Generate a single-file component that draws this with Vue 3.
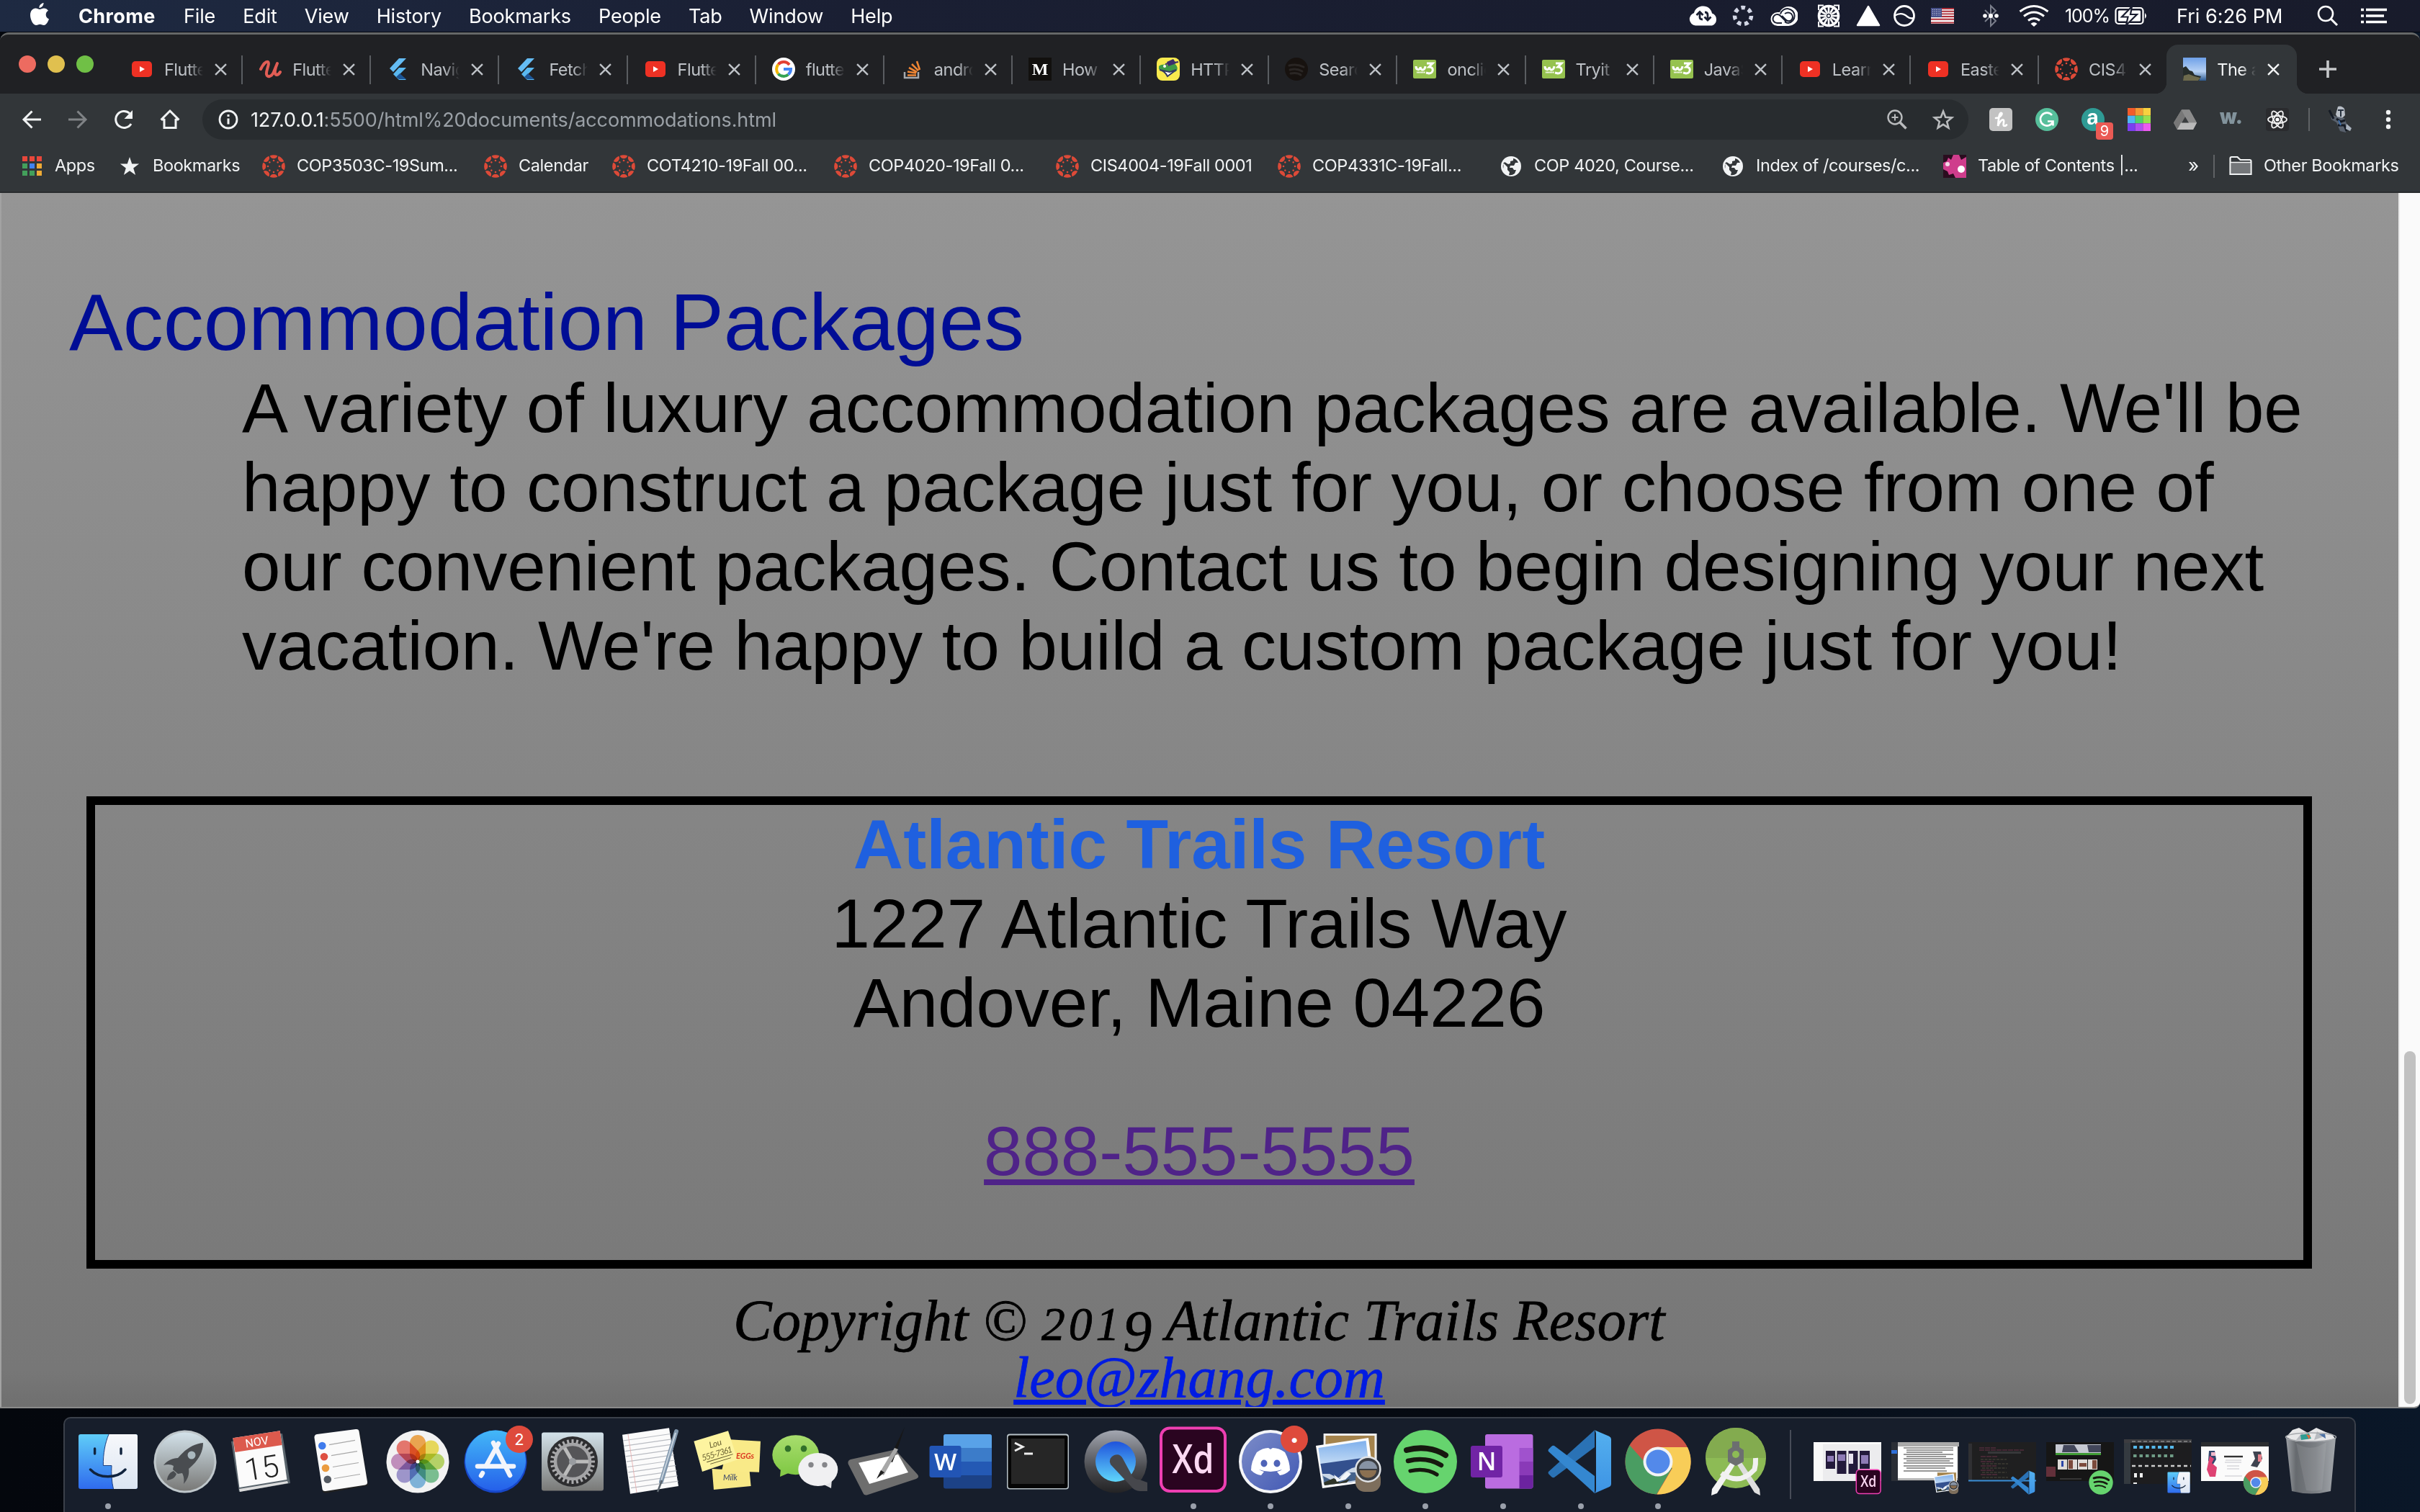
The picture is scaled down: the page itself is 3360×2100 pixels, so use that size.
<script setup>
const menus = ['File', 'Edit', 'View', 'History', 'Bookmarks', 'People', 'Tab', 'Window', 'Help']

const tabs = [
  { icon: 'youtube', title: 'Flutter' },
  { icon: 'udemy', title: 'Flutter' },
  { icon: 'flutter', title: 'Navigate' },
  { icon: 'flutter', title: 'Fetch' },
  { icon: 'youtube', title: 'Flutter' },
  { icon: 'google', title: 'flutter' },
  { icon: 'stack', title: 'android' },
  { icon: 'medium', title: 'How to' },
  { icon: 'gator', title: 'HTTP' },
  { icon: 'spotdark', title: 'Search' },
  { icon: 'w3', title: 'onclick' },
  { icon: 'w3', title: 'Tryit E' },
  { icon: 'w3', title: 'JavaS' },
  { icon: 'youtube', title: 'Learn' },
  { icon: 'youtube', title: 'Easter' },
  { icon: 'canvas', title: 'CIS400' },
  { icon: 'photo', title: 'The a', active: true }
]

const bookmarks = [
  { icon: 'apps', title: 'Apps', size: 'apps' },
  { icon: 'star', title: 'Bookmarks', size: 'marks' },
  { icon: 'canvas', title: 'COP3503C-19Sum...' },
  { icon: 'canvas', title: 'Calendar', size: 'cal' },
  { icon: 'canvas', title: 'COT4210-19Fall 00...' },
  { icon: 'canvas', title: 'COP4020-19Fall 0...' },
  { icon: 'canvas', title: 'CIS4004-19Fall 0001' },
  { icon: 'canvas', title: 'COP4331C-19Fall...' },
  { icon: 'globe', title: 'COP 4020, Course...' },
  { icon: 'globe', title: 'Index of /courses/c...' },
  { icon: 'pink', title: 'Table of Contents |...' }
]

const extensions = ['honey', 'grammarly', 'amazon', 'grid', 'drive', 'wdot', 'react']

const dock = [
  { id: 'finder', run: true },
  { id: 'rocket' },
  { id: 'calendar' },
  { id: 'reminders' },
  { id: 'photos' },
  { id: 'appstore', badge: '2' },
  { id: 'settings' },
  { id: 'textedit' },
  { id: 'stickies' },
  { id: 'wechat' },
  { id: 'tablet' },
  { id: 'word' },
  { id: 'terminal' },
  { id: 'quicktime' },
  { id: 'xd', run: true },
  { id: 'discord', run: true, badge: '•' },
  { id: 'preview', run: true },
  { id: 'spotify', run: true },
  { id: 'onenote', run: true },
  { id: 'vscode', run: true },
  { id: 'chrome', run: true },
  { id: 'studio' }
]

const minimized = [
  { id: 'win-xd', app: 'xd' },
  { id: 'win-doc', app: 'preview' },
  { id: 'win-code', app: 'vscode' },
  { id: 'win-music', app: 'spotify' },
  { id: 'win-files', app: 'finder' },
  { id: 'win-web', app: 'chrome' }
]

const ring = [0, 45, 90, 135, 180, 225, 270, 315]
const petals = ['#f5a33c', '#f2e04a', '#b6d957', '#6fc08a', '#74b3e0', '#9a8fd0', '#c487bd', '#ee6a60']
const teeth = Array.from({ length: 28 }, (_, i) => (i * 360) / 28)
const spokes = [0, 30, 60, 90, 120, 150]
const gridColors = ['#f25c2b', '#f59a33', '#f8d13f', '#4fb6f2', '#52cf6a', '#97e04f', '#7a3ff0', '#b04ff0', '#ec5af0']
const shades = [0, 1, 2, 3, 4, 5, 6, 7, 8, 9]
</script>

<template>
  <div class="screen">
    <svg class="sprite" width="0" height="0" aria-hidden="true">
      <defs>
        <linearGradient id="gBlue" x1="0" y1="0" x2="0" y2="1"><stop offset="0" stop-color="#5fcdf8" /><stop offset="1" stop-color="#2f6bee" /></linearGradient>
        <linearGradient id="gStore" x1="0" y1="0" x2="0" y2="1"><stop offset="0" stop-color="#43b8f8" /><stop offset="1" stop-color="#2560ea" /></linearGradient>
        <linearGradient id="gWhite" x1="0" y1="0" x2="0" y2="1"><stop offset="0" stop-color="#f7f8fb" /><stop offset="1" stop-color="#dbe5f2" /></linearGradient>
        <linearGradient id="gSilver" x1="0" y1="0" x2="0" y2="1"><stop offset="0" stop-color="#d3e2ea" /><stop offset="1" stop-color="#797977" /></linearGradient>
        <linearGradient id="gGreen" x1="0" y1="0" x2="0" y2="1"><stop offset="0" stop-color="#a8dd6e" /><stop offset="1" stop-color="#80c844" /></linearGradient>
        <linearGradient id="gQt" x1="0" y1="0" x2="0" y2="1"><stop offset="0" stop-color="#a3a7b1" /><stop offset=".6" stop-color="#4a4b4f" /><stop offset="1" stop-color="#232325" /></linearGradient>
        <linearGradient id="gQtIn" x1="0" y1="0" x2="0" y2="1"><stop offset="0" stop-color="#1f53dc" /><stop offset="1" stop-color="#5fd6fb" /></linearGradient>
        <linearGradient id="gDiscord" x1="0" y1="0" x2="1" y2="1"><stop offset="0" stop-color="#7c8cc8" /><stop offset="1" stop-color="#4259b4" /></linearGradient>
        <linearGradient id="gSea" x1="0" y1="0" x2="0" y2="1"><stop offset="0" stop-color="#7fb0ec" /><stop offset="1" stop-color="#c5dcf5" /></linearGradient>
        <linearGradient id="gTrash" x1="0" y1="0" x2="1" y2="0"><stop offset="0" stop-color="#a9acb0" /><stop offset=".2" stop-color="#6e7175" /><stop offset=".6" stop-color="#85888c" /><stop offset="1" stop-color="#b0b3b7" /></linearGradient>
        <linearGradient id="gSky" x1="0" y1="0" x2="0" y2="1"><stop offset="0" stop-color="#6ea0e8" /><stop offset=".6" stop-color="#b7d2f4" /><stop offset="1" stop-color="#2d5a90" /></linearGradient>
        <linearGradient id="gVs" x1="0" y1="0" x2="0" y2="1"><stop offset="0" stop-color="#54b0ef" /><stop offset="1" stop-color="#3d93e4" /></linearGradient>
      </defs>

      <!-- tab and bookmark icons -->
      <symbol id="youtube" viewBox="0 0 32 32"><rect x="2" y="5" width="28" height="22" rx="5" fill="#ee3124" /><path d="M13 12l7 4-7 4z" fill="#fff" /></symbol>
      <symbol id="udemy" viewBox="0 0 32 32"><path d="M3 16C6 10 10 5 13 6c3 2-3 12-2 17 1 5 7 4 10-3l5-12c-3 7-5 15-1 16 2 0 4-2 5-4" fill="none" stroke="#e15d55" stroke-width="4" stroke-linecap="round" stroke-linejoin="round" /></symbol>
      <symbol id="flutter" viewBox="0 0 32 32"><path d="M17 1h10L9 20l-5-5z" fill="#64bcf4" /><path d="M17 14h10l-9 9 9 8H17l-8-8z" fill="#5ab8f0" /><path d="M13 27l5-5 9 8H17z" fill="#1c5596" /></symbol>
      <symbol id="google" viewBox="0 0 32 32"><circle cx="16" cy="16" r="16" fill="#fff" /><path d="M24 10A10 10 0 0 0 8.5 9.500" fill="none" stroke="#e34133" stroke-width="4" /><path d="M8.500 9.500a10 10 0 0 0 0 13" fill="none" stroke="#f3b605" stroke-width="4" /><path d="M8.500 22.500a10 10 0 0 0 14 1" fill="none" stroke="#34a353" stroke-width="4" /><path d="M16 16h10a10 10 0 0 1-3.500 7.500" fill="none" stroke="#4285f4" stroke-width="4" /></symbol>
      <symbol id="stack" viewBox="0 0 32 32"><path d="M6 20v8h19v-8" fill="none" stroke="#a5a9ad" stroke-width="2.500" /><path d="M10 24.500h12M10 19.500l12 2M12 14l11 6M16 9l9 9M23 5l4 12" stroke="#ee8534" stroke-width="2.600" /></symbol>
      <symbol id="medium" viewBox="0 0 32 32"><rect width="32" height="32" fill="#12100e" /><text x="16" y="24" text-anchor="middle" font-family="Liberation Serif" font-weight="700" font-size="24" fill="#fff">M</text></symbol>
      <symbol id="gator" viewBox="0 0 32 32"><rect width="32" height="32" rx="8" fill="#f8ea4e" /><path d="M3 12c4-3 9-3 13-1l8-3c5 3 6 8 3 11l-9 4C12 19 6 18 3 16z" fill="#3f9a46" /><path d="M14 6l9-4 4 6-11 4z" fill="#3d2f6b" /><path d="M12 9l18-3" stroke="#3d2f6b" stroke-width="2" /><path d="M4 17c5 1 8 3 11 9l12-9-9 3z" stroke="#333b60" stroke-width="2" fill="#fff" /><circle cx="11" cy="12" r="2" fill="#fff" /></symbol>
      <symbol id="spotdark" viewBox="0 0 32 32"><circle cx="16" cy="16" r="16" fill="#17120f" /><path d="M6 11c7-2 14-1 20 2M7 17c6-2 12-1 17 2M8 22c5-1 10-1 14 2" fill="none" stroke="#2a2624" stroke-width="3" stroke-linecap="round" /></symbol>
      <symbol id="w3" viewBox="0 0 32 32"><rect y="3" width="32" height="26" rx="2" fill="#96c24f" /><path d="M4 12c0 6 6 6 6 1 1 6 6 5 7-1M19 8h8l-5 5c8 0 6 9 0 9l-4-1" fill="none" stroke="#fff" stroke-width="3" /><path d="M5 20.500h12" stroke="#fff" stroke-width="1.800" stroke-dasharray="1.500 .5" /></symbol>
      <symbol id="canvas" viewBox="0 0 32 32">
        <g v-for="a in ring" :key="a" :transform="`rotate(${a} 16 16)`" fill="#dd4a38"><path d="M10.700 1.300Q16-1 21.300 1.300Q20 5.300 16 5.300Q12 5.300 10.700 1.300z" /><circle cx="16" cy="8" r="1.300" /></g>
      </symbol>
      <symbol id="photo" viewBox="0 0 32 32"><rect width="32" height="32" fill="url(#gSky)" /><path d="M0 14l4-2 5 6 4 1 3 5 9 2-3 6H0z" fill="#252c2a" /><path d="M1 25l7-2 8 3 8 2-3 4H0z" fill="#6d6a4c" /></symbol>
      <symbol id="apps" viewBox="0 0 32 32">
        <path d="M3 2h7v7H3zM13 2h7v7h-7zM23 2h7v7h-7z" fill="#e8473b" /><path d="M3 12h7v7H3zM3 22h7v7H3zM13 22h7v7h-7z" fill="#43a05b" /><path d="M13 12h7v7h-7z" fill="#3f82f0" /><path d="M23 12h7v7h-7zM23 22h7v7h-7z" fill="#eeaa35" />
      </symbol>
      <symbol id="star" viewBox="0 0 32 32"><path d="M16 3l3.200 9.400 9.900.1-7.900 6 2.900 9.500-8.100-5.700L7.900 28l2.900-9.500-7.900-6 9.900-.1z" fill="#f1f3f4" /></symbol>
      <symbol id="globe" viewBox="0 0 32 32"><circle cx="16" cy="16" r="14" fill="#f1f3f4" /><path d="M19 5q5 1 7 6l-4 0-2 4h-5l-1 3 4 0 2 3 3 0-2 5q-4 3-8 2l1-4-3-3 0-4-6-6q1 6 0 8-1-6 2-9l5 3 3-1 0-3 4-1z" fill="#323639" /></symbol>
      <symbol id="pink" viewBox="0 0 32 32"><rect width="32" height="32" fill="#cf3d8c" /><path d="M0 0h14l-3 7-4-3-2 5-5 2zM0 20l6 3 2 5 6-2 3 6H0zM22 0l3 7 7-4V0z" fill="#2a0d1f" /><circle cx="6" cy="13" r="3" fill="#f2dbe7" /><circle cx="25" cy="20" r="5" fill="#fff" /></symbol>

      <!-- extension icons -->
      <symbol id="honey" viewBox="0 0 32 32"><rect width="32" height="32" rx="5" fill="#c2c2c2" /><path d="M9 14c6 0 10-6 8-7-4-1-4 10-5 18 2-6 6-10 8-8 1 2-2 8 1 8 1 0 2-.5 3-1.500" fill="none" stroke="#fff" stroke-width="2.700" stroke-linecap="round" /></symbol>
      <symbol id="grammarly" viewBox="0 0 32 32"><circle cx="16" cy="16" r="16" fill="#57bf9b" /><path d="M23 10a9 9 0 1 0 1.500 8.500M17 18.500h7.500v6" fill="none" stroke="#fff" stroke-width="2.600" /></symbol>
      <symbol id="amazon" viewBox="0 0 32 32"><circle cx="16" cy="16" r="16" fill="#2f9b95" /><text x="15.500" y="23" text-anchor="middle" font-family="Liberation Sans" font-weight="700" font-size="30" fill="#fff">a</text></symbol>
      <symbol id="grid" viewBox="0 0 33 33"><rect v-for="(c, i) in gridColors" :key="c" :x="(i % 3) * 11" :y="Math.floor(i / 3) * 11" width="11" height="11" :fill="c" /></symbol>
      <symbol id="drive" viewBox="0 0 32 32"><path d="M11 2.500h11l10 18-5 9.500H5L0 20.500z" fill="#9f9f9f" /><path d="M11 2.500h11l10 18H21z" fill="#8b8b8b" /><path d="M0 20.500L11 2.500l5 9.500L5 30z" fill="#777" /><path d="M10 20.500h22L27 30H5z" fill="#b9b9b9" /><path d="M16 12l5 8.500H11z" fill="#3a3c3e" /></symbol>
      <symbol id="wdot" viewBox="0 0 32 32"><text x="0" y="22" textLength="32" lengthAdjust="spacingAndGlyphs" font-family="Inter" font-weight="900" font-size="28" fill="#82939c">w.</text></symbol>
      <symbol id="react" viewBox="0 0 32 32"><rect width="32" height="32" rx="4" fill="#2a2b2e" /><g fill="none" stroke="#f2f2f2" stroke-width="1.800"><ellipse cx="16" cy="16" rx="13" ry="5" /><ellipse cx="16" cy="16" rx="13" ry="5" transform="rotate(60 16 16)" /><ellipse cx="16" cy="16" rx="13" ry="5" transform="rotate(120 16 16)" /></g><circle cx="16" cy="16" r="2.600" fill="#fff" /></symbol>

      <!-- dock icons -->
      <symbol id="finder" viewBox="0 0 100 100">
        <rect x="9" y="12" width="82" height="76" rx="3" fill="url(#gBlue)" />
        <path d="M51 12c-5 12-8 27-7.600 43.500H55C54.300 66 55 78 57.500 88H88a3 3 0 0 0 3-3V15a3 3 0 0 0-3-3z" fill="url(#gWhite)" />
        <path d="M51 12c-5 12-8 27-7.600 43.500H55C54.300 66 55 78 57.500 88" fill="none" stroke="#1c3f80" stroke-width="1" />
        <path d="M31.600 32v7M68 32v7M25.500 61c12 13 37 13 48.500 0" fill="none" stroke="#10233d" stroke-width="3.400" stroke-linecap="round" />
      </symbol>
      <symbol id="rocket" viewBox="0 0 100 100">
        <circle cx="50" cy="50" r="43.500" fill="#bfc7cb" /><circle cx="50" cy="50" r="40.500" fill="url(#gSilver)" />
        <path d="M75 24C61 25 49 34 40 45c-8 0-15 4-20 10 6-2 11-1 14 1l-1 5 7 6 6-1c2 4 3 8 2 15 6-7 8-13 7-21 12-10 20-22 20-36z" fill="#494c50" />
        <circle cx="59" cy="41" r="5.500" fill="#aab8bf" /><path d="M34 63c-6 2-9 8-9 13 6-1 11-3 13-9z" fill="#494c50" />
      </symbol>
      <symbol id="calendar" viewBox="0 0 100 100">
        <path d="M6 22l71-11 11 69-71 12z" fill="#59646c" /><path d="M17 88l67-11 1 3-67 12z" fill="#ddd" />
        <path d="M8.400 17.300L73.700 7.300 83.400 75l-66 11z" fill="#fbfbfb" /><path d="M8.400 17.300L73.700 7.300 76.500 27 11.500 37z" fill="#dc5a4d" />
        <g transform="rotate(-9 45 50)" font-family="Roboto" text-anchor="middle"><text x="46" y="28" font-size="16" fill="#fff">NOV</text><text x="47" y="74" font-size="43" font-weight="300" fill="#222">15</text></g>
      </symbol>
      <symbol id="reminders" viewBox="0 0 100 100">
        <path d="M16 14l60-7 12 76-59 11-4-2z" fill="#222" /><path d="M17 12l54-7q4-.5 4.500 3L87 78q.5 4-3 4.500L29 91q-4 .5-4.500-3L13.500 17q-.5-4 3.500-5z" fill="#fafafa" />
        <circle cx="24.300" cy="28" r="5.300" fill="#3f7bec" /><circle cx="27" cy="43.300" r="5.300" fill="#de4f41" /><circle cx="29" cy="59" r="5.300" fill="#eb9c40" /><circle cx="31.800" cy="74.700" r="5.300" fill="#555b63" />
        <path d="M34 26.700l36-6.400M37 41.700l36-6M39 57.500l36-6M41 73.500l36-6" stroke="#a8a8a8" stroke-width="1.200" />
      </symbol>
      <symbol id="photos" viewBox="0 0 100 100">
        <circle cx="50" cy="50" r="43.500" fill="#f2f2f2" />
        <g class="petals"><rect v-for="(c, i) in petals" :key="c" class="petal" x="39" y="13" width="22" height="37" rx="11" :fill="c" opacity=".88" :transform="`rotate(${i * 45} 50 50)`" /></g>
        <circle cx="50" cy="50" r="2.500" fill="#fff" />
      </symbol>
      <symbol id="appstore" viewBox="0 0 100 100">
        <circle cx="50" cy="50" r="43.500" fill="#1747c9" /><circle cx="50" cy="48.500" r="42" fill="url(#gStore)" />
        <g stroke="#f3f5fb" stroke-width="6.500" stroke-linecap="round" fill="none"><path d="M47 24l23 45" /><path d="M54 25L37 56" /><path d="M25 56.500h50" /><path d="M32 66l-2 3.500" /></g>
      </symbol>
      <symbol id="settings" viewBox="0 0 100 100">
        <rect x="7" y="9.500" width="86" height="81" rx="3" fill="url(#gSilver)" /><circle cx="50" cy="50" r="35" fill="#2e2e30" />
        <g fill="#aaaaac"><rect v-for="t in teeth" :key="t" x="48.500" y="19" width="3" height="8" :transform="`rotate(${t} 50 50)`" /></g>
        <circle cx="50" cy="50" r="24" fill="#555558" stroke="#a4a4a6" stroke-width="4.500" />
        <path d="M50 50h22M50 50L39 69M50 50L39 31" stroke="#bbb" stroke-width="5" /><circle cx="50" cy="50" r="5" fill="#999ca0" />
      </symbol>
      <symbol id="textedit" viewBox="0 0 100 100">
        <path d="M11 12.700L76 3.300 89 84l-67 10.700z" fill="#fbfbfb" />
        <path v-for="i in shades" :key="i" :d="`M${12 + i * 1.200} ${21 + i * 7.300}l66-9.500`" stroke="#b9bcc2" stroke-width="1.200" /><path d="M19 12l12 81" stroke="#e4a8a8" stroke-width=".8" />
        <path d="M86 8L65 78" stroke="#7f95ab" stroke-width="6" stroke-linecap="round" /><path d="M85 10L65 76" stroke="#c7d3de" stroke-width="2" /><path d="M66 76l-6 16" stroke="#5d666f" stroke-width="2.500" />
      </symbol>
      <symbol id="stickies" viewBox="0 0 100 100">
        <path d="M27.600 60L79.600 63l2 21-51.600 5z" fill="#f8e987" /><path d="M52 19.300l43 2.400-2 43-52-2z" fill="#f9ea88" /><path d="M2.400 21.700L50 7.300 63 47.300 14 64z" fill="#fdf4a0" />
        <g font-family="Lato" font-style="italic"><g transform="rotate(-17 34 34)" fill="#6b6334" font-size="12"><text x="26" y="29">Lou</text><text x="11" y="43" textLength="44">555-7361</text><path d="M16 46h38M20 50h30" stroke="#544d26" stroke-width="1" /></g><text x="61" y="46" font-size="11" font-weight="700" fill="#dc3a22">EGGs</text><text x="43" y="76" font-size="11" fill="#33406a">Milk</text></g>
      </symbol>
      <symbol id="wechat" viewBox="0 0 100 100">
        <path d="M16 60l-1 11 14-6z" fill="#87cb49" /><ellipse cx="36.800" cy="40.700" rx="32.500" ry="27.500" fill="url(#gGreen)" /><ellipse cx="26" cy="32" rx="4.300" ry="4.500" fill="#31702a" /><ellipse cx="48" cy="32" rx="4.300" ry="4.500" fill="#31702a" />
        <path d="M87 74l-1 13-12-6z" fill="#e2e3e6" /><ellipse cx="67.800" cy="61" rx="27.500" ry="23" fill="#f0f0f2" /><circle cx="58" cy="54.500" r="3.700" fill="#85868a" /><circle cx="77" cy="54.500" r="3.700" fill="#85868a" />
      </symbol>
      <symbol id="tablet" viewBox="0 0 100 100">
        <path d="M5 47l59-13q4-1 6 3l28 31q3 4-2 6L29 96q-5 2-7-3L2 54q-2-5 3-7z" fill="#6e6e6e" /><path d="M16 51.700L71 40l14 25-54 16z" fill="#fff" />
        <path d="M80 2L66 31l-9 18 6 2 7-18z" fill="#171717" /><path d="M66 31l5 2-20 36-6-3z" fill="#a8a8a8" /><path d="M47 62l5 3-11 9z" fill="#222" />
      </symbol>
      <symbol id="word" viewBox="0 0 100 100">
        <rect x="26" y="12" width="67" height="75.500" rx="3" fill="#1c4287" /><path d="M26 50h67v19H26z" fill="#2459b4" /><path d="M26 31h67v19H26z" fill="#3c7cc9" /><path d="M29 12h61a3 3 0 0 1 3 3v16H26V15a3 3 0 0 1 3-3z" fill="#59a2e8" />
        <rect x="6.500" y="28" width="44" height="44" rx="3" fill="#2255b5" /><text x="28.500" y="62" text-anchor="middle" font-family="Open Sans" font-weight="600" font-size="33" fill="#fff">W</text>
      </symbol>
      <symbol id="terminal" viewBox="0 0 100 100">
        <rect x="7" y="11.500" width="86" height="77" rx="4" fill="#b8c2c8" /><rect x="8.500" y="13.500" width="83" height="73.500" rx="3" fill="#050505" /><rect x="13" y="18" width="74" height="63" fill="#262626" />
        <path d="M18 24l11 5.500L18 35" fill="none" stroke="#eee" stroke-width="3" /><path d="M31 39h12" stroke="#eee" stroke-width="3" />
      </symbol>
      <symbol id="quicktime" viewBox="0 0 100 100">
        <circle cx="50" cy="50" r="43.500" fill="url(#gQt)" /><circle cx="50" cy="50" r="28" fill="url(#gQtIn)" /><path d="M43 54q-4-9 5-13 8-3 12 5l13 24q4 5 10 5l11 4v12H84q-8 0-13-7z" fill="#46474c" />
      </symbol>
      <symbol id="xd" viewBox="0 0 100 100">
        <rect x="4" y="1.500" width="93" height="91.500" rx="14" fill="#ee3fb2" /><rect x="8" y="5.500" width="85" height="83.500" rx="10" fill="#2a0420" /><text x="50.500" y="65.500" text-anchor="middle" font-family="Open Sans" font-weight="600" font-size="56" textLength="58" lengthAdjust="spacingAndGlyphs" fill="#fcd9f3">Xd</text>
      </symbol>
      <symbol id="discord" viewBox="0 0 100 100">
        <circle cx="50" cy="50" r="44" fill="#f4f5f8" /><circle cx="50" cy="50" r="40" fill="url(#gDiscord)" />
        <path d="M31 37q8-6 16-6l3 2 3-2q9 0 17 6 7 13 7 25-6 6-14 7l-4-5q5-1 7-3-16 6-32 0 3 2 7 3l-4 5q-8-1-14-7 0-12 8-25z" fill="#fff" /><ellipse cx="41" cy="52.500" rx="4.500" ry="5" fill="#4f64b8" /><ellipse cx="59" cy="52.500" rx="4.500" ry="5" fill="#4f64b8" />
      </symbol>
      <symbol id="preview" viewBox="0 0 100 100">
        <path d="M15.600 11h74v62h-74z" fill="#eee" /><path d="M18.500 14h68v58h-68z" fill="#a4834c" /><path d="M5 28l73-11 8 60-72 10z" fill="#fbfbfb" />
        <path d="M8.500 31l66-10 3 25-66 9z" fill="url(#gSea)" /><path d="M11.500 53L77 44l5 31-65.500 8z" fill="#33508e" /><path d="M14 67l10 0 12 6 10-9 9-5 8-2 17-4 2 22-66 8z" fill="#c9d6e6" /><path d="M15 70l12 6 14-4 12-7 10 0 18-2 1 6-14 6-51 7z" fill="#44628c" /><path d="M16 79l14-6 8 6 14-5-4 5-31 4z" fill="#2f3428" /><path d="M30 68l8 6 10-10 6 3-8 8-12 3z" fill="#f2f5f9" />
        <rect x="60" y="61" width="35" height="31" rx="13" fill="#7d6e5c" /><circle cx="77.400" cy="60.700" r="17" fill="#3a3c40" stroke="#dfe2e5" stroke-width="2.500" /><path d="M65 60a12.500 11 0 0 1 25 0z" fill="#8793a4" /><path d="M66 62h23a11 10 0 0 1-23 0z" fill="#8b7051" />
      </symbol>
      <symbol id="spotify" viewBox="0 0 100 100">
        <circle cx="50" cy="50" r="44" fill="#66d46e" /><g fill="none" stroke="#16190f" stroke-linecap="round"><path d="M24 34c19-5 39-3 54 7" stroke-width="8" /><path d="M26 49c16-4 33-2 46 6" stroke-width="6.500" /><path d="M29 63c13-3 26-2 37 5" stroke-width="5.200" /></g>
      </symbol>
      <symbol id="onenote" viewBox="0 0 100 100">
        <rect x="25" y="12" width="66.500" height="75.500" rx="3" fill="#ba6ce0" /><path d="M72.500 31h19v19h-19z" fill="#a052cd" /><path d="M72.500 50h19v19h-19z" fill="#8a3ab8" /><path d="M72.500 69h19v15.500a3 3 0 0 1-3 3h-16z" fill="#6c23a0" />
        <rect x="5" y="28" width="44" height="44" rx="3" fill="#7124a5" /><text x="27" y="62" text-anchor="middle" font-family="Open Sans" font-weight="600" font-size="34" fill="#fff">N</text>
      </symbol>
      <symbol id="vscode" viewBox="0 0 100 100">
        <path d="M70 6.300V30L14 72q-2 1-4-1l-4-4q-1-2 0-3z" fill="#2a72b5" /><path d="M70 94V70L14 28q-2-1-4 1l-4 4q-1 2 0 3z" fill="#3487d0" /><path d="M70 6.300l20 8.500q3 1.500 3 4v62q0 3-3 4.500L70 94q2-2 2-5V11q0-3-2-4.700z" fill="url(#gVs)" />
      </symbol>
      <symbol id="chrome" viewBox="0 0 100 100">
        <circle cx="50" cy="50" r="45.500" fill="#cf5546" /><path d="M10.600 27.300A45.500 45.500 0 0 0 48 95.500L70 58 50 50H31z" fill="#4a9d62" /><path d="M91 30H50v20l20 9-21.500 36.500A45.500 45.500 0 0 0 91 30z" fill="#f8cd58" /><circle cx="50" cy="50" r="20.500" fill="#f2f3f5" /><circle cx="50" cy="50" r="16.500" fill="#5389ea" />
      </symbol>
      <symbol id="studio" viewBox="0 0 100 100">
        <circle cx="50" cy="45" r="42" fill="#8dbb55" /><path d="M8 45a42 42 0 0 1 84 0z" fill="#83ab4f" />
        <path d="M45 48h8L24 94l-8 3 1-9z" fill="#f3f3f3" /><path d="M48 48h8l27 40 1 9-8-4z" fill="#dedede" /><path d="M30 66q25 18 46-5 2-7 1.500-16" fill="none" stroke="#f1f1f1" stroke-width="7" />
        <path d="M45 22h10v8l6 4v16L50 56 39 50V34l6-4z" fill="#6c6f70" /><circle cx="50" cy="40" r="5" fill="#8dbb55" />
      </symbol>

      <!-- minimized windows -->
      <symbol id="win-xd" viewBox="0 0 100 100"><rect x="3" y="23" width="94" height="54" fill="#ececee" /><path d="M3 23h94v2.500H3z" fill="#fff" /><path d="M3 25h13v52H3z" fill="#f8f8f8" /><path d="M20 35h13v25H20zM35.500 35h13v32h-13zM51.500 35h13v32h-13zM67 35h14v25H67z" fill="#231a3b" /><path d="M22 42h9v8h-9zM37 40h10v9H37zM69 41h10v12H69z" fill="#8e7bb6" /><path d="M52 39h6v14h-6z" fill="#e9e4f0" /></symbol>
      <symbol id="win-doc" viewBox="0 0 100 100"><rect x="3" y="23" width="94" height="54" fill="#2a2e36" /><path d="M12 23h85v6H12z" fill="#aaa" /><path d="M12 29h83v44H12z" fill="#fff" /><path d="M3 34h8v5H3z" fill="#2f6fd8" /><path d="M20 31h69M24 34h65M24 37h50M20 40h69M24 43h55M20 46h69M24 49h60M20 52h69M20 56h69M24 59h54M20 63h60" stroke="#777" stroke-width="1.400" /><path d="M12 73h83v3H12z" fill="#b8b8b8" /></symbol>
      <symbol id="win-code" viewBox="0 0 100 100"><rect x="3" y="23" width="94" height="54" fill="#1f1f20" /><path d="M3 25h5v51H3z" fill="#303033" /><path d="M3 75.500h94v2H3z" fill="#3b8fd8" /><path d="M18 31h24M18 34h62M20 43h24M20 50h18M20 56h22M20 62h18M20 68h24" stroke="#6b3348" stroke-width="1.200" stroke-dasharray="7 1" /><path d="M20 47h36M22 53h36M22 59h34M22 65h34M22 72h36" stroke="#4c4b3c" stroke-width="1" stroke-dasharray="4 1.500" /><path d="M30 36h46v3H30z" fill="#37383a" /></symbol>
      <symbol id="win-music" viewBox="0 0 100 100"><rect x="3" y="23" width="94" height="54" fill="#161616" /><path d="M16 26h63v12H16z" fill="#c6c9d2" /><path d="M27 27h15l6 10H25zM60 27h19v10H62z" fill="#42465a" /><path d="M16 38h63v3H16z" fill="#3f9b34" /><path d="M19 47h13v14H19zM33 47h13v14H33zM47 47h13v14H47zM61 47h13v14H61z" fill="#dedad7" /><path d="M34 48h6v12h-6zM49 52h10v5H49zM67 48h6v12h-6z" fill="#7c4a3c" /><path d="M24 49h3v8h-3z" fill="#2c46a8" /><path d="M3 57h13v14H3z" fill="#63303a" /><path d="M22 74h30" stroke="#555" /></symbol>
      <symbol id="win-files" viewBox="0 0 100 100"><rect x="3" y="19" width="94" height="62" fill="#1d1d1f" /><path d="M3 19h94v5H3z" fill="#3c3c40" /><path d="M3 24h9v57H3z" fill="#343a40" /><path d="M14 22h82" stroke="#888" stroke-width="1.500" stroke-dasharray="5 3" /><path d="M16 30h57" stroke="#55b7ea" stroke-width="4" stroke-dasharray="5 3.500" /><path d="M16 42h57" stroke="#6f9c86" stroke-width="4" stroke-dasharray="4.500 4" /><path d="M14 56h82" stroke="#ccc" stroke-width="2.600" stroke-dasharray="5 4" /><path d="M17 66h4v6h-4zM25 66h4v6h-4zM16 79h5v2h-5z" fill="#eee" /></symbol>
      <symbol id="win-web" viewBox="0 0 100 100"><rect x="3" y="23" width="94" height="54" fill="#fbfbfb" /><path d="M3 23h94v6H3z" fill="#2b2d30" /><path d="M14 35h8l2 12-5 8-6-6z" fill="#34476e" /><path d="M15 42l6 4-3 6 7 6-2 13-8 0-4-10z" fill="#de4373" /><path d="M17 37h6v5h-6z" fill="#efb6c8" /><path d="M75 36h11l2 10-7 12-9-2 6-10z" fill="#3f4450" /><path d="M82 40h5v10h-5z" fill="#e7828d" /><path d="M35 43h26" stroke="#333" stroke-width="2.400" /><path d="M37 48h22M36 51h23M39 56h17M39 60h17M36 70h24" stroke="#c4c4ca" /></symbol>
      <symbol id="trash" viewBox="0 0 100 100">
        <path d="M16 17q34 8 69 0l-7 74q-27 7-54 0z" fill="url(#gTrash)" opacity=".92" /><path d="M16 16L25 6l9-3 12 7 12-7 13 6 9 3 4 6-17 4H30z" fill="#e7e7e8" /><path d="M30 20l8-10 10 9zM55 20l4-12 10 7z" fill="#b7bbc0" /><path d="M36 13l12-2 3 7-14 2z" fill="#2f9c92" /><path d="M44 12l6 2-2 5z" fill="#e36b3d" /><path d="M62 12l8-1 1 7z" fill="#4b6fa3" /><ellipse cx="50.500" cy="16" rx="35" ry="6" fill="none" stroke="#a6a9ad" stroke-width="1.500" /><path d="M30 24q20 14 42-1l-6 66q-10 3-22 1z" fill="#fff" opacity=".09" />
      </symbol>
    </svg>

    <header class="menubar">
      <svg class="apple" viewBox="0 0 26 32"><path d="M18.500 0c.3 3-2.500 7-6 7C12 4 15 .6 18.500 0zM13 9c2-.2 3.500-1.500 6-1.500 2.300 0 4.600 1.200 6 3.300-5 3-4 9.700 1 11.700-1.500 4-4 8.500-7 8.500-2.200 0-3-1.300-5.500-1.300S10.200 31 8 31C3.500 31 0 22.500 0 17c0-6 3.600-9.400 7.300-9.400 2.500 0 4.200 1.400 5.700 1.400z" fill="#fff" /></svg>
      <b class="app-name">Chrome</b>
      <nav class="menus"><span v-for="m in menus" :key="m">{{ m }}</span></nav>
      <div class="status">
        <svg class="s-cloud" width="40" height="32" viewBox="0 0 40 32"><path d="M9 29.500a9 9 0 0 1-2-17.500C9 5 14 2.500 20 2.500s11 4 12 10a9 9 0 0 1 0 17z" fill="#fff" /><path d="M15 12v6q0 3 4 3M10.500 15l4.500-4.500 4.500 4.500M26 20v-5q0-4-4-4M21.500 17.500l4.500 4.500 4.500-4.500" fill="none" stroke="#1a1f31" stroke-width="2.800" /></svg>
        <svg class="s-dots" width="30" height="32" viewBox="0 0 30 32"><circle cx="15" cy="16" r="11.500" fill="none" stroke="#d3d7e6" stroke-width="5.500" pathLength="77" stroke-dasharray="6 5" /></svg>
        <svg class="s-cc" width="38" height="32" viewBox="0 0 38 32"><path d="M10 30a9.500 9.500 0 0 1 0-19h3A13.500 13.500 0 1 1 25 30z" fill="#fff" /><path d="M16 26h-6a6 6 0 1 1 4-10l8 8M14 13.500a10 10 0 1 1 11 12.500q-3 0-5-2M20 13q5-3 9 0 4 5 0 9-4 3-8-1l-5-5" fill="none" stroke="#1a1f31" stroke-width="2" /></svg>
        <svg class="s-wheel" width="32" height="32" viewBox="0 0 32 32"><g stroke="#fff" fill="none"><circle cx="16" cy="16" r="13.500" stroke-width="3.600" /><path v-for="s in spokes" :key="s" d="M16 3v8M16 21v8" stroke-width="2.600" :transform="`rotate(${s} 16 16)`" /><path d="M2 8V1.500h7M30 8V1.500h-7M2 24v6.500h7M30 24v6.500h-7" stroke-width="2" /></g><circle cx="16" cy="16" r="5" fill="#fff" /><circle cx="16" cy="16" r="2.500" fill="none" stroke="#1a1f31" stroke-width="1.300" /></svg>
        <svg class="s-tri" width="34" height="32" viewBox="0 0 34 32"><path d="M17 3L32 29H2z" fill="#fff" stroke="#fff" stroke-width="2.500" stroke-linejoin="round" /></svg>
        <svg class="s-circle" width="30" height="32" viewBox="0 0 30 32"><circle cx="15" cy="16" r="13.500" fill="none" stroke="#fff" stroke-width="2.800" /><path d="M2 15.500c7-4 12-3 17 1.500 3 2.500 6 3 9.500 2" fill="none" stroke="#fff" stroke-width="2.400" /></svg>
        <svg class="s-flag" width="32" height="22" viewBox="0 0 32 22"><rect width="32" height="22" fill="#f4f1f1" /><path d="M0 1h32M0 4.700h32M0 8.400h32M0 12h32M0 15.700h32M0 20.500h32" stroke="#b0303a" stroke-width="1.900" /><rect width="15" height="13" fill="#46508a" /><path d="M2 2.500h12M2 5h12M2 7.500h12M2 10h12" stroke="#d8dcec" stroke-width="1" stroke-dasharray="1 1.500" /></svg>
        <svg class="s-bt" width="22" height="32" viewBox="0 0 22 32"><path d="M3 8l15 15-7 7V2l7 7L3 24" fill="none" stroke="#7a7e8b" stroke-width="2" /><circle cx="3" cy="16" r="2.800" fill="#fff" /><circle cx="11" cy="16" r="3" fill="#fff" /><circle cx="19" cy="16" r="2.800" fill="#fff" /></svg>
        <svg class="s-wifi" width="42" height="32" viewBox="0 0 42 32"><path d="M1.500 10q19.500-15 39 0M7 16.500q14-11 28 0M13 22.500q8-6 16 0" fill="none" stroke="#fff" stroke-width="3" /><path d="M16.500 27q4.500-4 9 0L21 31z" fill="#fff" /></svg>
        <span class="percent">100%</span>
        <svg class="s-bat" width="46" height="28" viewBox="0 0 46 28"><rect x="1.500" y="3" width="38" height="22" rx="4" fill="none" stroke="#fff" stroke-width="2.200" /><rect x="5" y="6.500" width="31" height="15" rx="1.500" fill="#fff" /><path d="M42 10q4 4 0 8z" fill="#fff" /><path d="M24 1L10 15.500h8.500L16 27l15-15h-9z" fill="#fff" stroke="#1a1e30" stroke-width="2.200" /></svg>
        <span class="clock">Fri 6:26 PM</span>
        <svg class="s-search" width="30" height="30" viewBox="0 0 30 30"><circle cx="12" cy="12" r="10" fill="none" stroke="#fff" stroke-width="2.600" /><path d="M19 19l9 9" stroke="#fff" stroke-width="3" /></svg>
        <svg class="s-list" width="36" height="22" viewBox="0 0 36 22"><path d="M0 2.500h4M7 2.500h29M0 11h4M7 11h25M0 19.500h4M7 19.500h29" stroke="#fff" stroke-width="3.600" /></svg>
      </div>
    </header>

    <section class="window">
      <div class="tabstrip">
        <div class="lights"><i class="red"></i><i class="yellow"></i><i class="green"></i></div>
        <div v-for="(t, i) in tabs" :key="i" class="tab" :class="{ active: t.active, last: i === tabs.length - 2 }">
          <svg class="favicon"><use :href="'#' + t.icon" /></svg>
          <span class="title">{{ t.title }}</span>
          <svg class="close" viewBox="0 0 16 16"><path d="M1 1l14 14M15 1L1 15" stroke="currentColor" stroke-width="2.300" /></svg>
        </div>
        <svg class="plus" viewBox="0 0 24 24"><path d="M12 0v24M0 12h24" stroke="#c6c8ca" stroke-width="3.600" /></svg>
      </div>

      <div class="toolbar">
        <svg class="nav" viewBox="0 0 32 32"><path d="M29 16H5M16.500 4.500L5 16l11.500 11.500" fill="none" stroke="#f1f3f4" stroke-width="3" /></svg>
        <svg class="nav" viewBox="0 0 32 32"><path d="M3 16h24M15.500 4.500L27 16 15.500 27.500" fill="none" stroke="#808386" stroke-width="3" /></svg>
        <svg class="nav" viewBox="0 0 32 32"><path d="M26 22a11.500 11.500 0 1 1-2-14.500" fill="none" stroke="#f1f3f4" stroke-width="3" /><path d="M28 3v12H16.500z" fill="#f1f3f4" /></svg>
        <svg class="nav" viewBox="0 0 32 32"><path d="M8 15v12.500h16V15M3.500 16.500L16 4l12.500 12.500M4 16h4.500M23.500 16H28" fill="none" stroke="#f1f3f4" stroke-width="3" /></svg>
        <div class="omnibox">
          <svg class="info" viewBox="0 0 28 28"><circle cx="14" cy="14" r="12" fill="none" stroke="#f1f3f4" stroke-width="2.800" /><path d="M14 12.500v8M14 7v3" stroke="#f1f3f4" stroke-width="3" /></svg>
          <span class="url"><b>127.0.0.1</b>:5500/html%20documents/accommodations.html</span>
          <svg class="pill-icon" viewBox="0 0 32 32"><circle cx="13" cy="13" r="9.500" fill="none" stroke="#b9bbbd" stroke-width="2.400" /><path d="M13 8.500v9M8.500 13h9" stroke="#b9bbbd" stroke-width="2" /><path d="M20 20l8.500 8.500" stroke="#b9bbbd" stroke-width="3.600" /></svg>
          <svg class="pill-icon" viewBox="0 0 32 32"><path d="M16 4.500l3.200 8.300 8.900.6-6.900 5.700 2.200 8.600-7.400-4.800-7.400 4.800 2.200-8.600-6.900-5.700 8.900-.6z" fill="none" stroke="#b9bbbd" stroke-width="2.600" /></svg>
        </div>
        <div class="extensions">
          <span v-for="e in extensions" :key="e" class="ext"><svg width="32" height="32"><use :href="'#' + e" /></svg><em v-if="e === 'amazon'">9</em></span>
        </div>
        <i class="bar"></i>
        <svg class="avatar" viewBox="0 0 36 38"><path d="M14 1q5-2 9 3l1 9-4 4h-6l-3-5z" fill="#b9bfc7" /><path d="M14 6h8M18 6v9" stroke="#26303d" stroke-width="2" /><path d="M4 12l8 3 11 2 4 10-2 10-8-2-5-12-7-4z" fill="#59616d" /><path d="M12 18l6 4 6-2M14 27h9l3 8M2 6l6 12" stroke="#141a24" stroke-width="3" fill="none" /><path d="M26 25l7 6-2 4-6-3z" fill="#aab3bf" /><path d="M15 20l3 7" stroke="#3d6ca8" stroke-width="2" /></svg>
        <svg class="dots" viewBox="0 0 8 28"><circle cx="4" cy="4" r="3.200" /><circle cx="4" cy="14" r="3.200" /><circle cx="4" cy="24" r="3.200" /></svg>
      </div>

      <div class="bookmarks">
        <span v-for="(b, i) in bookmarks" :key="i" class="mark" :class="b.size"><svg width="32" height="32"><use :href="'#' + b.icon" /></svg><span class="label">{{ b.title }}</span></span>
        <span class="more">»</span>
        <span class="other"><svg width="32" height="32" viewBox="0 0 32 32"><path d="M1.500 27V5q0-2 2-2h8l4 4h13q2 0 2 2v18z" fill="#323639" stroke="#f1f3f4" stroke-width="2.200" /><path d="M3 11h26v15H3z" fill="#74777a" /><path d="M2 10.500h28" stroke="#f1f3f4" stroke-width="1.600" /></svg><span class="label">Other Bookmarks</span></span>
      </div>

      <div class="viewport">
        <main class="page">
          <h2>Accommodation Packages</h2>
          <p class="intro">A variety of luxury accommodation packages are available. We'll be happy to construct a package just for you, or choose from one of our convenient packages. Contact us to begin designing your next vacation. We're happy to build a custom package just for you!</p>
          <div class="contact">
            <div><strong>Atlantic Trails Resort</strong></div>
            <div>1227 Atlantic Trails Way</div>
            <div>Andover, Maine 04226</div>
            <p><a class="phone">888-555-5555</a></p>
          </div>
          <footer>
            <div class="copy">Copyright © <span class="low">201</span><span class="drop">9</span> Atlantic Trails Resort</div>
            <div class="mail"><a>leo@zhang.com</a></div>
          </footer>
        </main>
        <div class="scrollbar"><i></i></div>
      </div>
    </section>

    <div class="dock">
      <div v-for="d in dock" :key="d.id" class="cell">
        <svg width="100" height="100"><use :href="'#' + d.id" /></svg>
        <em v-if="d.badge" class="badge">{{ d.badge }}</em>
        <i v-if="d.run" class="running"></i>
      </div>
      <i class="divider"></i>
      <div v-for="m in minimized" :key="m.id" class="cell">
        <svg width="100" height="100"><use :href="'#' + m.id" width="100" height="100" /><use :href="'#' + m.app" x="60" y="60" width="38" height="38" /></svg>
      </div>
      <div class="cell trash"><svg width="100" height="100"><use href="#trash" /></svg></div>
    </div>
  </div>
</template>

<style>
body { margin: 0; background: #050a14; }
</style>

<style scoped>
.screen { width: 3360px; height: 2100px; overflow: hidden; display: flex; flex-direction: column; background: linear-gradient(90deg, #04070d 0, #060a12 60%, #0a1728 100%); font-family: Inter, "Liberation Sans", sans-serif; }
.sprite { position: absolute; }
svg { display: block; flex: none; }
i, em { font-style: normal; }
.petal { mix-blend-mode: multiply; }

.menubar { height: 45px; flex: none; box-sizing: border-box; display: flex; align-items: center; background: linear-gradient(90deg, #1e2a42 0, #1a1f33 35%, #181b2b 100%); color: #fff; font-size: 27px; padding-left: 42px; border-bottom: 1px solid #05080f; }
.apple { width: 26px; height: 32px; margin-top: -4px; }
.app-name { margin-left: 41px; width: 108px; font-weight: 700; letter-spacing: .4px; }
.menus { display: flex; gap: 38px; margin-left: 38px; letter-spacing: -.15px; }
.status { margin-left: auto; display: flex; align-items: center; padding-right: 46px; }
.s-dots { margin-left: 20px; }
.s-cc { margin-left: 23px; }
.s-wheel { margin-left: 27px; }
.s-tri { margin-left: 22px; }
.s-circle { margin-left: 18px; }
.s-flag { margin-left: 22px; }
.s-bt { margin-left: 40px; }
.s-wifi { margin-left: 28px; }
.percent { width: 62px; margin-left: 22px; font-size: 25px; letter-spacing: -1.1px; }
.s-bat { margin-left: 7px; }
.clock { width: 152px; margin-left: 40px; letter-spacing: .05px; white-space: nowrap; }
.s-search { margin-left: 43px; }
.s-list { margin-left: 31px; }

.window { height: 1911px; flex: none; box-sizing: border-box; border: 2px solid #6a6c6c; border-width: 3px 0 2px; border-color: #666868 #666 #8a8a8a; border-radius: 12px 12px 8px 0; overflow: hidden; display: flex; flex-direction: column; background: #202124; }
.tabstrip { height: 82px; flex: none; display: flex; align-items: flex-end; background: #202124; }
.lights { width: 158px; height: 82px; flex: none; box-sizing: border-box; display: flex; gap: 16px; padding: 29px 0 0 26px; }
.lights i { width: 24px; height: 24px; border-radius: 50%; }
.red { background: #ed6b60; }
.yellow { background: #e0c04f; }
.green { background: #70c046; }
.tab { position: relative; width: 178.150px; height: 68px; flex: none; box-sizing: border-box; display: flex; align-items: center; padding-left: 23px; color: #bdc1c6; }
.tab::after { content: ""; position: absolute; right: -1px; top: 15px; width: 2px; height: 40px; background: #5a5d61; }
.tab.last::after, .tab.active::after { display: none; }
.favicon { width: 32px; height: 32px; }
.title { width: 54px; margin-left: 15px; overflow: hidden; white-space: nowrap; font-size: 23.500px; letter-spacing: -.5px; -webkit-mask-image: linear-gradient(90deg, #000 62%, transparent 100%); mask-image: linear-gradient(90deg, #000 62%, transparent 100%); }
.close { width: 17px; height: 17px; margin-left: 16px; }
.tab.active { background: #323639; border-radius: 16px 16px 0 0; width: 181px; color: #f1f3f4; }
.tab.active::before { content: ""; position: absolute; left: -16px; right: -16px; bottom: 0; height: 16px; background: radial-gradient(circle at 0 0, transparent 16px, #323639 16.500px) left / 16px 16px no-repeat, radial-gradient(circle at 100% 0, transparent 16px, #323639 16.500px) right / 16px 16px no-repeat; }
.plus { width: 24px; height: 24px; margin: 0 0 22px 31px; }

.toolbar { height: 72px; flex: none; display: flex; align-items: center; background: #323639; padding-left: 28px; }
.nav { width: 32px; height: 32px; margin-right: 32px; }
.omnibox { width: 2452px; height: 56px; margin-left: -3px; box-sizing: border-box; display: flex; align-items: center; padding: 0 19px 0 22px; border-radius: 28px; background: #282c2f; }
.info { width: 28px; height: 28px; }
.url { flex: 1; margin-left: 17px; font-size: 27px; letter-spacing: -.12px; color: #9aa0a6; white-space: nowrap; }
.url b { font-weight: 400; color: #f1f3f4; }
.pill-icon { width: 32px; height: 32px; margin-left: 32px; }
.extensions { display: flex; gap: 32px; margin-left: 29px; }
.ext { position: relative; }
.ext em { position: absolute; left: 20px; top: 20px; width: 24px; height: 24px; border-radius: 4px; background: #ea5a54; color: #fff; font-size: 20px; line-height: 25px; text-align: center; }
.bar { width: 2px; height: 32px; margin-left: 27px; background: #5f6265; }
.avatar { width: 36px; height: 38px; margin-left: 25px; }
.dots { width: 8px; height: 28px; margin-left: 44px; fill: #f1f3f4; }

.bookmarks { height: 66px; flex: none; box-sizing: border-box; display: flex; align-items: center; padding: 0 0 6px 28px; background: #323639; border-bottom: 2px solid #292c2e; color: #f1f3f4; font-size: 23.500px; letter-spacing: -.4px; white-space: nowrap; }
.mark { width: 308px; flex: none; display: flex; align-items: center; gap: 16px; }
.label { padding-bottom: 3px; }
.apps { width: 136px; }
.marks { width: 200px; }
.cal { width: 178px; }
.more { width: 14px; margin-left: 32px; padding-bottom: 3px; font-size: 26px; }
.other { height: 32px; margin-left: 21px; padding-left: 20px; border-left: 2px solid #5f6265; display: flex; align-items: center; gap: 16px; }

.viewport { flex: 1; min-height: 0; display: flex; }
.page { width: 3330px; box-sizing: border-box; padding: 116px 120px 0; overflow: hidden; border-left: 2px solid #a2a2a2; background: linear-gradient(#959595 0, #777 97%, #6f6f6f 100%); color: #000; font-family: "Liberation Sans", Arial, sans-serif; font-size: 96px; line-height: 110px; }
h2 { margin: 0 0 0 -26px; font-size: 112px; line-height: 128px; font-weight: 400; color: #000d95; }
.intro { margin: 0 0 0 214px; width: 2880px; }
.contact { margin: 154px 0 0 -2px; width: 3090px; height: 656px; box-sizing: border-box; border: 12px solid #000; text-align: center; }
.contact strong { color: #1f60df; }
.contact p { margin: 96px 0; }
.phone { color: #4f2388; text-decoration: underline; text-decoration-thickness: 8px; text-underline-offset: 6px; text-decoration-skip-ink: none; }
footer { width: 3090px; margin: 32px 0 0 -2px; text-align: center; font-family: "Liberation Serif", Georgia, serif; font-style: italic; font-size: 80px; line-height: 81px; -webkit-text-stroke: .8px currentColor; }
.copy { height: 81px; letter-spacing: .2px; }
.low { font-size: .82em; line-height: 0; letter-spacing: 5px; }
.drop { position: relative; top: 15px; line-height: 0; }
.mail { margin-top: -2px; }
.mail a { color: #001be2; text-decoration: underline; text-decoration-thickness: 7px; text-underline-offset: 4px; }
.scrollbar { width: 30px; flex: none; box-sizing: border-box; border-left: 2px solid #e9e9e9; background: #fafafa; display: flex; align-items: flex-end; justify-content: center; padding: 0 0 4px; }
.scrollbar i { width: 16px; height: 490px; border-radius: 8px; background: #c1c1c1; }

.dock { width: 3183px; height: 134px; margin: 12px 0 0 88px; box-sizing: border-box; display: flex; padding: 10px 0 0 6px; border: 2px solid #3b404a; border-bottom: 0; border-radius: 10px 10px 0 0; background: #171e2b; }
.cell { position: relative; width: 107.620px; height: 100px; flex: none; display: flex; justify-content: center; }
.badge { position: absolute; left: 68px; top: 0; width: 38px; height: 38px; border-radius: 50%; background: #de4a3c; color: #fff; font-size: 22px; line-height: 38px; text-align: center; }
.running { position: absolute; left: 50px; top: 108px; width: 8px; height: 8px; border-radius: 50%; background: #9aa0ab; }
.divider { width: 2px; height: 96px; margin: 6px 24px 0 22px; background: #474c57; }
.trash { margin-left: -3px; }
</style>
